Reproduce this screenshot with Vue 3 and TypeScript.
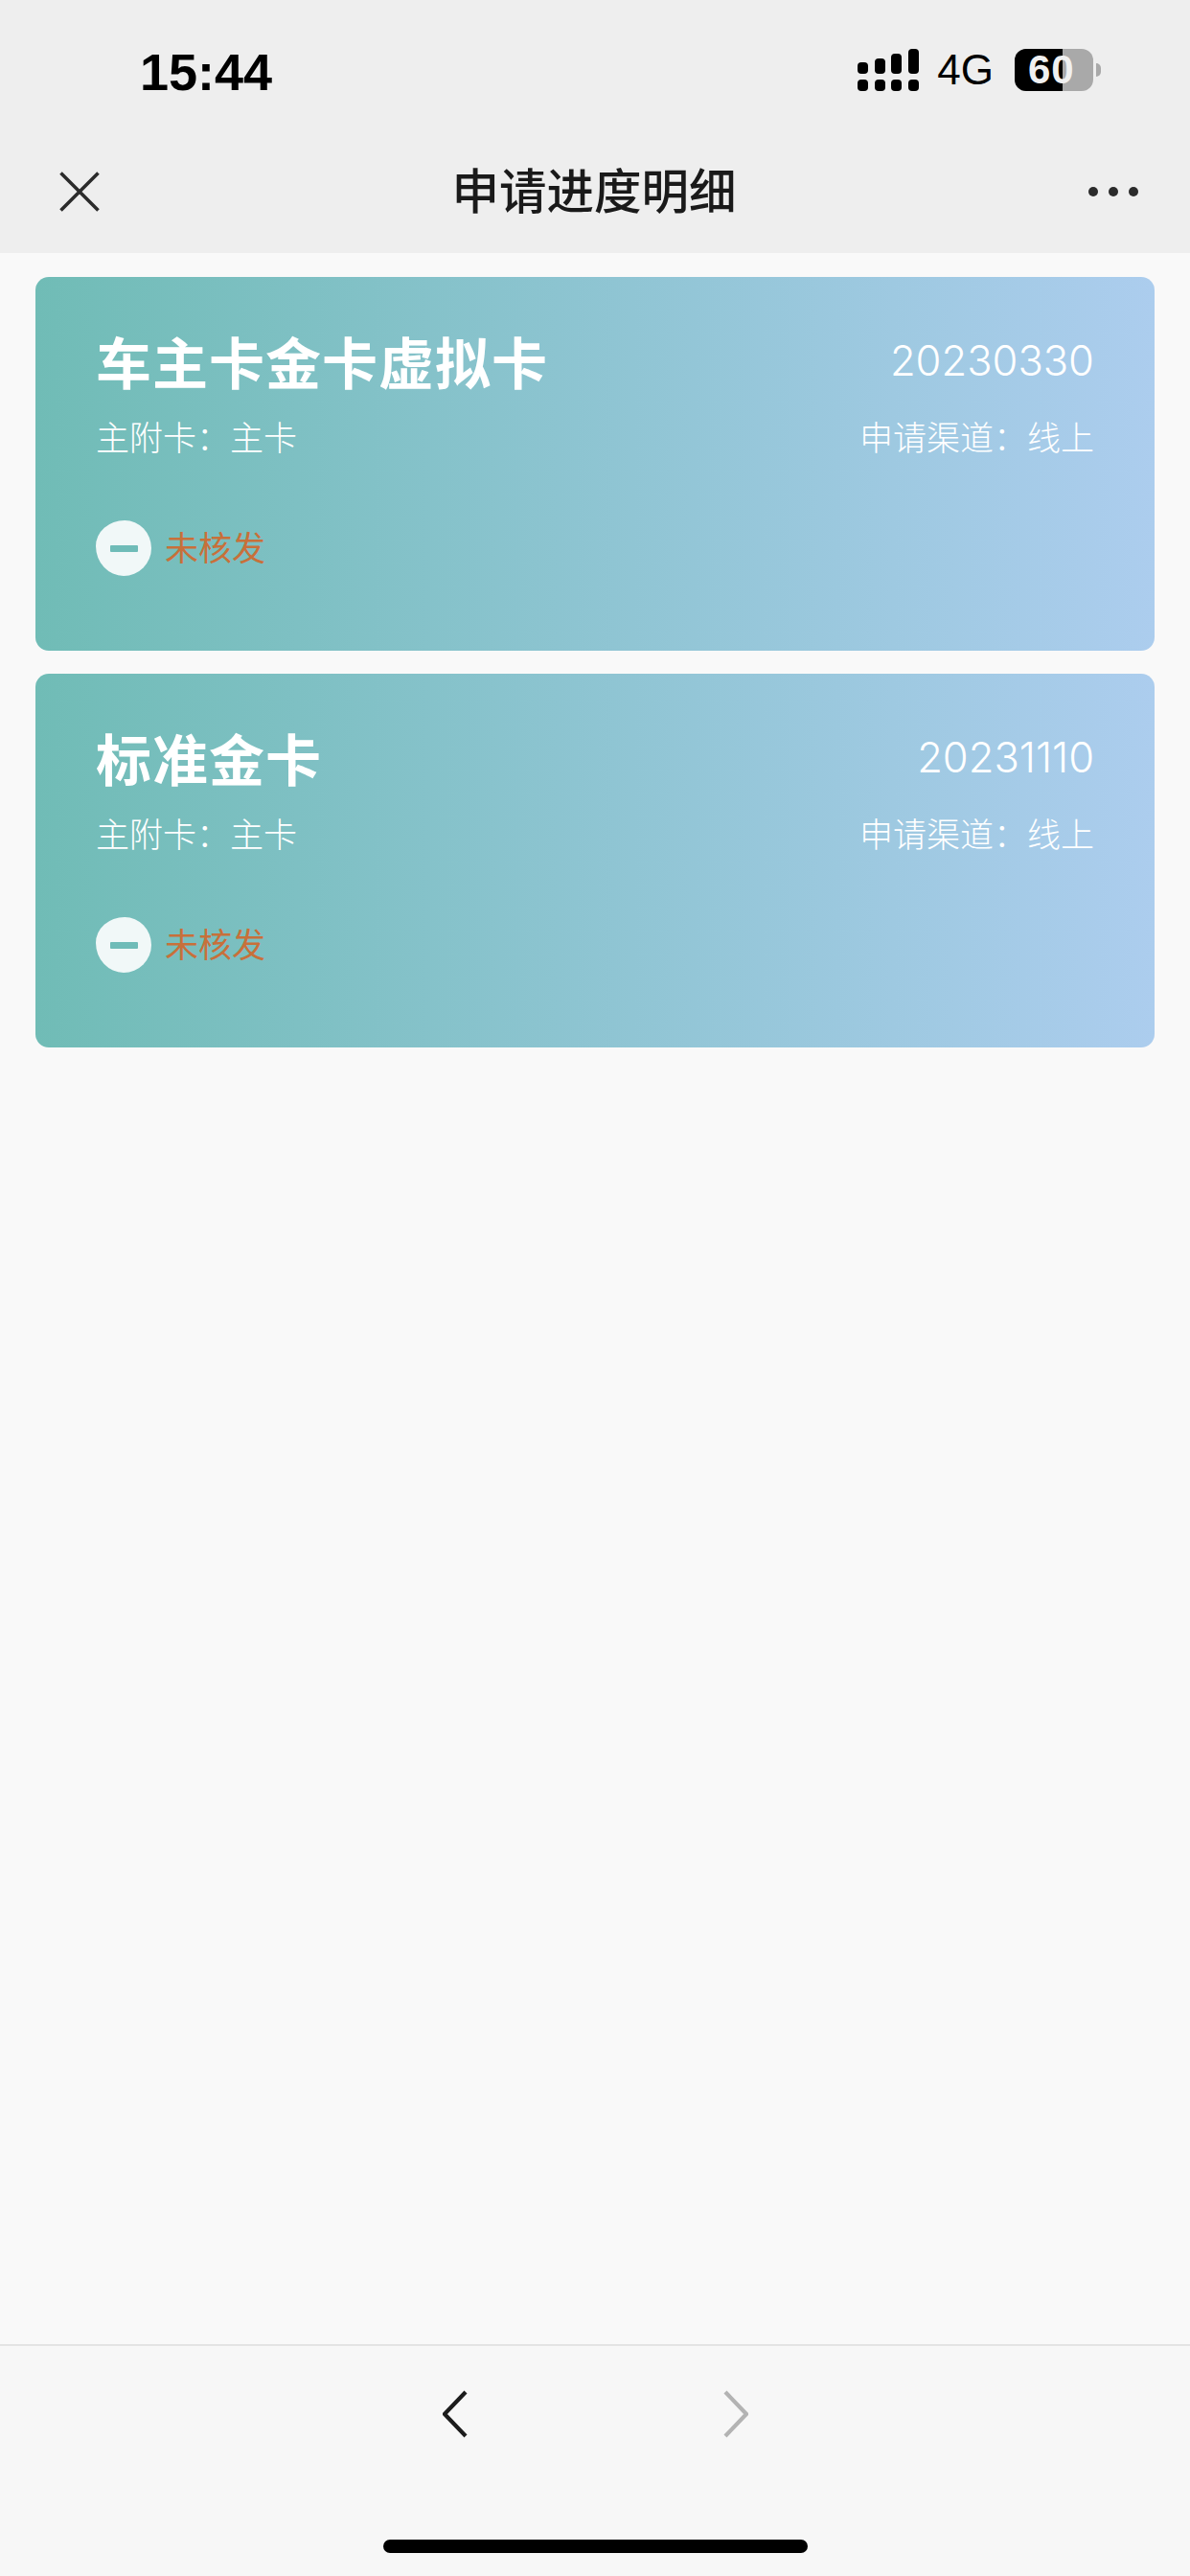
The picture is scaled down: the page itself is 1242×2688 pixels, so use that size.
<template>
  <div class="page">
    <header class="top">
      <div class="status">
        <span class="time">15:44</span>
        <div class="status-right">
          <svg class="signal" width="64" height="44" viewBox="0 0 64 44">
            <g fill="#000">
              <rect x="0" y="14" width="11" height="12" rx="4" />
              <rect x="18" y="10" width="11" height="16" rx="4" />
              <rect x="35" y="5" width="11" height="21" rx="4" />
              <rect x="53" y="0" width="11" height="26" rx="4" />
              <rect x="0" y="32" width="11" height="12" rx="4" />
              <rect x="18" y="32" width="11" height="12" rx="4" />
              <rect x="35" y="32" width="11" height="12" rx="4" />
              <rect x="53" y="32" width="11" height="12" rx="4" />
            </g>
          </svg>
          <span class="net">4G</span>
          <div class="battery">
            <div class="battery-body">
              <span class="battery-fill"></span>
              <span class="battery-num">60</span>
            </div>
            <span class="battery-cap"></span>
          </div>
        </div>
      </div>
      <div class="nav">
        <svg class="close" width="42" height="42" viewBox="0 0 42 42">
          <path d="M1.5 1.5 40.5 40.5M40.5 1.5 1.5 40.5" stroke="#2b2b2b" stroke-width="3.6" fill="none" />
        </svg>
        <h1 class="title">申请进度明细</h1>
        <div class="dots"><i></i><i></i><i></i></div>
      </div>
    </header>

    <main class="list">
      <section v-for="card in cards" :key="card.name" class="card">
        <div class="row">
          <span class="name">{{ card.name }}</span>
          <span class="date">{{ card.date }}</span>
        </div>
        <div class="row sub">
          <span>主附卡：主卡</span>
          <span>申请渠道：线上</span>
        </div>
        <div class="state">
          <span class="state-icon"><i></i></span>
          <span class="state-text">未核发</span>
        </div>
      </section>
    </main>

    <footer class="bottom">
      <div class="arrows">
        <svg width="26" height="50" viewBox="0 0 26 50">
          <path d="M24 2 2 25 24 48" stroke="#1c1c1c" stroke-width="4.2" fill="none" />
        </svg>
        <svg width="26" height="50" viewBox="0 0 26 50">
          <path d="M2 2 24 25 2 48" stroke="#b3b3b3" stroke-width="4.2" fill="none" />
        </svg>
      </div>
      <div class="home"></div>
    </footer>
  </div>
</template>

<script setup lang="ts">
interface Card {
  name: string;
  date: string;
}

const cards: Card[] = [
  { name: '车主卡金卡虚拟卡', date: '20230330' },
  { name: '标准金卡', date: '20231110' },
];
</script>

<style>
html,
body {
  margin: 0;
  background: #f9f9f9;
}
</style>

<style scoped>
.page {
  width: 1242px;
  height: 2688px;
  display: flex;
  flex-direction: column;
  background: #f9f9f9;
  font-family: "Inter", "Noto Sans CJK SC", sans-serif;
  overflow: hidden;
}

.top {
  height: 264px;
  background: #eeeeee;
  flex: none;
}

.status {
  height: 130px;
  box-sizing: border-box;
  padding: 51px 93px 0 146px;
  display: flex;
  justify-content: space-between;
  align-items: flex-start;
}

.time {
  font-size: 54px;
  line-height: 48px;
  font-weight: 700;
  color: #000;
  font-family: "Liberation Sans", sans-serif;
}

.status-right {
  display: flex;
  align-items: center;
  height: 44px;
}

.net {
  margin-left: 19px;
  font-size: 44px;
  line-height: 44px;
  color: #000;
  font-family: "Liberation Sans", sans-serif;
}

.battery {
  margin-left: 22px;
  display: flex;
  align-items: center;
}

.battery-body {
  position: relative;
  width: 82px;
  height: 44px;
  border-radius: 12px;
  background: #a9a9a9;
}

.battery-fill {
  position: absolute;
  left: 0;
  top: 0;
  bottom: 0;
  width: 50px;
  border-radius: 12px 0 0 12px;
  background: #000;
}

.battery-num {
  position: absolute;
  left: 14px;
  top: 0;
  font-size: 42px;
  line-height: 44px;
  font-weight: 700;
  letter-spacing: 1px;
  color: #f0f0f0;
  font-family: "Liberation Sans", sans-serif;
}

.battery-cap {
  margin-left: 3px;
  width: 5px;
  height: 14px;
  background: #a9a9a9;
  border-radius: 0 7px 7px 0;
}

.nav {
  height: 134px;
  box-sizing: border-box;
  padding: 6px 54px 0 62px;
  display: flex;
  align-items: center;
  justify-content: space-between;
}

.title {
  margin: 0;
  font-size: 49.5px;
  line-height: 60px;
  font-weight: 500;
  color: #1a1a1a;
}

.dots {
  display: flex;
  gap: 11px;
}

.dots i {
  width: 10px;
  height: 10px;
  border-radius: 50%;
  background: #2b2b2b;
}

.list {
  flex: 1;
  padding: 25px 37px 0;
  display: flex;
  flex-direction: column;
  gap: 24px;
}

.card {
  height: 390px;
  box-sizing: border-box;
  padding: 56px 63px 0 63px;
  border-radius: 14px;
  background: linear-gradient(90deg, #70bcb6 0%, #accdee 100%);
  color: #fff;
}

.row {
  display: flex;
  justify-content: space-between;
  align-items: center;
}

.name {
  font-size: 58px;
  line-height: 70px;
  font-weight: 700;
  letter-spacing: 1px;
}

.date {
  position: relative;
  top: -4px;
  font-size: 43.5px;
  line-height: 70px;
  font-weight: 300;
}

.sub {
  margin-top: 20px;
  font-size: 35px;
  line-height: 44px;
  font-weight: 300;
}

.state {
  margin-top: 64px;
  display: flex;
  align-items: center;
  gap: 14px;
}

.state-icon {
  width: 58px;
  height: 58px;
  border-radius: 52% 48% 50% 50% / 46% 50% 50% 54%;
  background: #f1f8f8;
  display: flex;
  align-items: center;
  justify-content: center;
}

.state-icon i {
  width: 29px;
  height: 7px;
  border-radius: 1px;
  background: #6fbcb8;
}

.state-text {
  font-size: 35px;
  line-height: 44px;
  color: #c8703a;
}

.bottom {
  flex: none;
  height: 242px;
  box-sizing: border-box;
  border-top: 2px solid #e4e4e4;
  background: #f7f7f7;
  display: flex;
  flex-direction: column;
  align-items: center;
}

.arrows {
  margin-top: 46px;
  display: flex;
  gap: 267px;
}

.home {
  margin-top: 106px;
  width: 443px;
  height: 14px;
  border-radius: 7px;
  background: #000;
}
</style>
